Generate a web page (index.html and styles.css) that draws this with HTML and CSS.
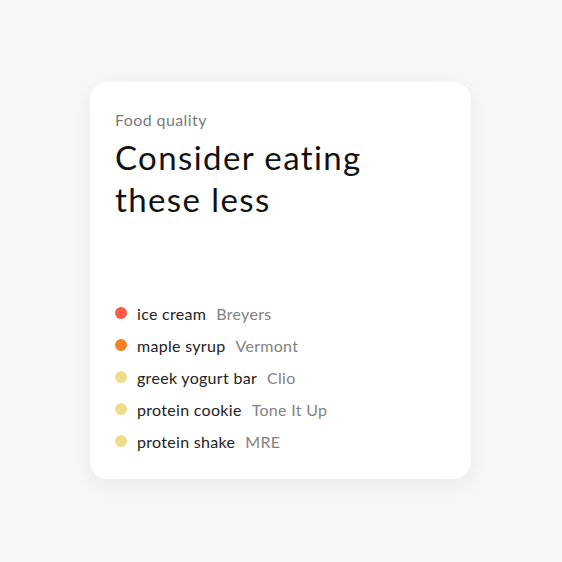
FILE: index.html
```html
<!DOCTYPE html>
<html>
<head>
<meta charset="utf-8">
<link rel="stylesheet" href="styles.css">
</head>
<body>
<div class="card">
  <div class="eyebrow">Food quality</div>
  <h1 class="title">Consider eating<br>these less</h1>
  <ul class="list">
    <li class="item"><span class="dot red"></span><span class="name">ice cream</span><span class="brand">Breyers</span></li>
    <li class="item"><span class="dot orange"></span><span class="name">maple syrup</span><span class="brand">Vermont</span></li>
    <li class="item"><span class="dot yellow"></span><span class="name">greek yogurt bar</span><span class="brand">Clio</span></li>
    <li class="item"><span class="dot yellow"></span><span class="name">protein cookie</span><span class="brand">Tone It Up</span></li>
    <li class="item"><span class="dot yellow"></span><span class="name">protein shake</span><span class="brand">MRE</span></li>
  </ul>
</div>
</body>
</html>
```
FILE: styles.css
```css
html, body {
  margin: 0;
  padding: 0;
  background: #f7f7f7;
  width: 562px;
  height: 562px;
}
body {
  display: flex;
  justify-content: center;
  align-items: flex-start;
  padding-top: 82px;
  box-sizing: border-box;
  font-family: Lato, "Open Sans", sans-serif;
  font-variant-ligatures: none;
}
.card {
  width: 381px;
  height: 397px;
  box-sizing: border-box;
  background: #fff;
  border-radius: 18px;
  box-shadow: 0 6px 24px rgba(0,0,0,0.06);
  padding: 28px 25px 0 25px;
  margin-left: -1px;
}
.eyebrow {
  font-size: 16px;
  line-height: 20px;
  letter-spacing: 0.4px;
  color: #7a7a7a;
}
.title {
  margin: 6px 0 0 0;
  font-weight: 400;
  font-size: 33px;
  line-height: 42px;
  letter-spacing: 1.4px;
  color: #111;
}
.list {
  list-style: none;
  margin: 77px 0 0 0;
  padding: 0;
  display: flex;
  flex-direction: column;
}
.item {
  display: flex;
  align-items: center;
  height: 32px;
  font-size: 16px;
  letter-spacing: 0.3px;
}
.dot {
  width: 12px;
  height: 12px;
  border-radius: 50%;
  margin-right: 10px;
  flex: none;
}
.red { background: #ff5a48; }
.orange { background: #f58220; }
.yellow { background: #eede8c; }
.name { color: #222; }
.brand { color: #828282; margin-left: 10px; }
```
